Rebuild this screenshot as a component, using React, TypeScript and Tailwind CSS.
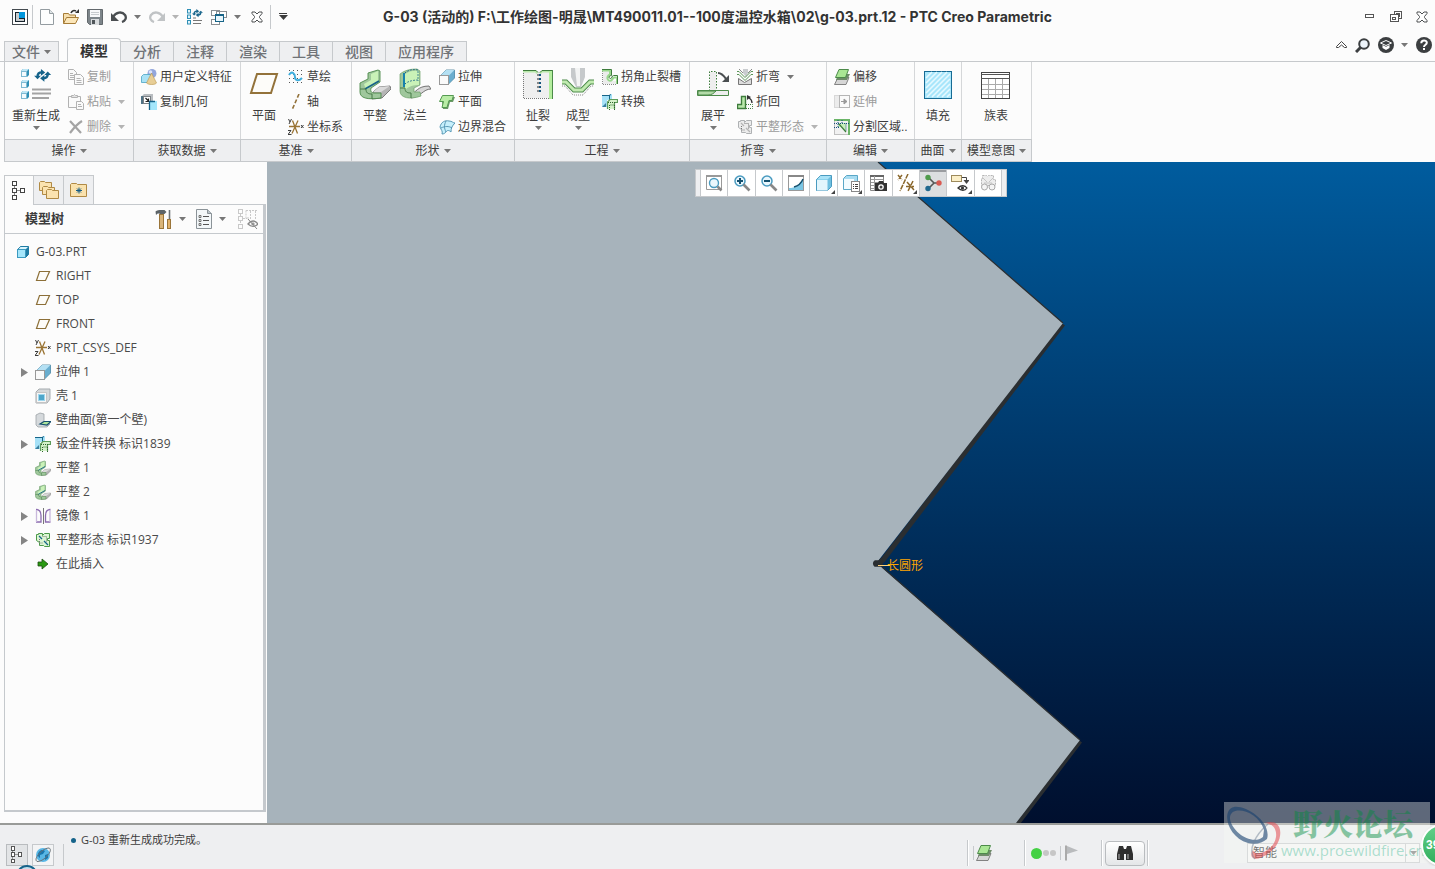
import React, { useState } from 'react';

type IconDef = { w: number; h: number; body: React.ReactNode };

const cube = (x: number, y: number) => (
  <g key={`${x}-${y}`}>
    <path d={`M${x} ${y + 2}l2-2h6v6l-2 2z`} fill="#2f8fb5" />
    <path d={`M${x} ${y + 2}l2-2h6l-2 2z`} fill="#bfe6f5" />
    <rect x={x + 0.5} y={y + 2.5} width="5" height="5" fill="#f4fbfe" stroke="#7fb9d2" />
  </g>
);

const refreshArrows = (
  <g fill="none" stroke="#15638a" strokeWidth="2.8">
    <path d="M3 9c0-4 2-5 5-5" />
    <path d="M15 6c0 4-2 5-5 5" />
    <path d="M7 0l5 4-5 4z" fill="#15638a" stroke="none" />
    <path d="M11 15l-5-4 5-4z" fill="#15638a" stroke="none" />
    <path d="M-1 8h8l-4 4z" fill="#15638a" stroke="none" />
    <path d="M11 7h8l-4-4z" fill="#15638a" stroke="none" />
  </g>
);

const csys = (
  <g fill="none" stroke="#9a7434" strokeWidth="1.3">
    <path d="M1 7.500h11M4.500 1.500l5 13M10 1.500l-6 13" />
    <path d="M0.500 0l1.500 3M3.500 0L1 5M0 11.500h3l-3 4h3.500M13 6l2.500 3M15.500 6L13 9" stroke="#3c3c3c" strokeWidth="1" />
  </g>
);

const flatShape = (line: string, fill: string, dark: string) => (
  <g strokeLinejoin="round">
    <path d="M3.5 1.5h4v2l2-2h5v5h-2v2h2v6h-5l-1-1h-4v-3l-3-2v-6h2z" fill={fill} stroke={line} />
    <path d="M4 4l3 3M9 9l4 4" stroke={dark} strokeWidth="1.3" />
    <path d="M7.5 4.5h4v5M4.5 7v4h4" stroke="#777" strokeDasharray="1 1" fill="none" />
  </g>
);

const ICONS: Record<string, IconDef> = {
  app: { w: 16, h: 16, body: (
    <g shapeRendering="crispEdges">
      <rect x="0.5" y="0.5" width="15" height="15" fill="#fff" stroke="#444b50" />
      <rect x="3" y="3" width="10" height="10" fill="#16232c" />
      <rect x="4" y="4" width="3" height="8" fill="#c8ccce" />
      <rect x="4" y="10" width="8" height="2" fill="#c8ccce" />
      <rect x="7" y="3" width="6" height="6" fill="#0096dc" />
    </g>) },
  newFile: { w: 14, h: 16, body: (
    <g><path d="M0.5 0.5h9l4 4v11h-13z" fill="#fdfefe" stroke="#949ca1" /><path d="M9.5 0.5v4h4" fill="#dfe5e8" stroke="#949ca1" /></g>) },
  open: { w: 16, h: 16, body: (
    <g>
      <path d="M0.5 14.5v-10h5l1 1.5h6v3" fill="#f6dfae" stroke="#a67c37" />
      <path d="M0.5 14.5l3-6h12l-3 6z" fill="#fbe6b9" stroke="#a67c37" />
      <path d="M8 4c1-2.500 3-3 5-2" fill="none" stroke="#333" strokeWidth="1.6" /><path d="M12 4h4V0z" fill="#333" />
    </g>) },
  save: { w: 16, h: 16, body: (
    <g><path d="M0.5 0.5h15v15h-13l-2-2z" fill="#7d858a" stroke="#62686c" /><rect x="3" y="1" width="10" height="7" fill="#f7f8f9" /><path d="M4 3.500h8M4 5.500h8" stroke="#c7cbce" /><rect x="4" y="10" width="8" height="6" fill="#d9dcde" /><rect x="5" y="11" width="3" height="4" fill="#50565a" /></g>) },
  undo: { w: 16, h: 12, body: (
    <g><path d="M2 6c3-5 9-6 12-2 2 3 0 6-3 7" fill="none" stroke="#4a4e51" strokeWidth="2.3" /><path d="M0 2v8h8z" fill="#4a4e51" /></g>) },
  redo: { w: 16, h: 12, body: (
    <g><path d="M14 6C11 1 5 0 2 4c-2 3 0 6 3 7" fill="none" stroke="#c0c3c5" strokeWidth="2.3" /><path d="M16 2v8H8z" fill="#c0c3c5" /></g>) },
  regenSmall: { w: 16, h: 16, body: (
    <g>
      {[0.5, 6, 11.5].map((y) => <rect key={y} x="0.5" y={y} width="3" height="3.500" fill="#dff3fb" stroke="#2f8fb5" />)}
      <path d="M6 11.500h9M6 14.500h8M6 9h3" stroke="#777" />
      <g transform="translate(5.500 0) scale(.55)">{refreshArrows}</g>
    </g>) },
  windows: { w: 16, h: 16, body: (
    <g fill="#fff" shapeRendering="crispEdges">
      <path d="M0.500 1.500h8v5h-8zM5.500 2.500h10v6h-10z" stroke="#8a8f93" />
      <rect x="0.500" y="10.500" width="8" height="5" stroke="#8a8f93" />
      <rect x="4.500" y="5.500" width="8" height="7" fill="#e8f6fc" stroke="#176488" /><path d="M4 6.500h9" stroke="#176488" />
    </g>) },
  closeX: { w: 12, h: 12, body: (
    <g><path d="M1 1h3l2 2 2-2h3v1.500L8.500 5.500v1L11 9.500V11H8L6 9l-2 2H1V9.500l2.500-3v-1L1 2.500z" fill="#fff" stroke="#4c4f51" /></g>) },
  minimize: { w: 10, h: 5, body: <rect x="0.5" y="0.5" width="8" height="3" fill="#fff" stroke="#555" /> },
  restore: { w: 12, h: 12, body: (
    <g fill="none" stroke="#555" shapeRendering="crispEdges"><path d="M4.500 3.500v-3h7v7h-3M6.500 3.500v-1h3v3h-1" /><rect x="0.500" y="3.500" width="8" height="7" fill="#fff" /><rect x="2.500" y="6.500" width="3" height="2" /></g>) },
  collapse: { w: 12, h: 8, body: <path d="M0.500 5.500L5.500 0.500l5 5v1h-2L5.500 4l-3 2.500h-2z" fill="#fff" stroke="#444" /> },
  search: { w: 15, h: 15, body: (
    <g><circle cx="9" cy="6" r="4.800" fill="#edf4fa" stroke="#3c3f41" strokeWidth="2" /><path d="M5.500 9.500L1 14" stroke="#3c3f41" strokeWidth="3" /></g>) },
  learn: { w: 16, h: 16, body: (
    <g><circle cx="8" cy="8" r="8" fill="#3c3f41" /><path d="M2.500 6L8 3.500 13.500 6 8 8.500z" fill="#3c3f41" stroke="#fff" /><path d="M4.500 8v3L8 13l3.500-2V8L8 9.800z" fill="#fff" /></g>) },
  help: { w: 16, h: 16, body: (
    <g><circle cx="8" cy="8" r="8" fill="#3c3f41" /><path d="M5.300 6.200C5.300 2.500 10.800 2.800 10.800 5.800 10.800 7.800 8 7.700 8 10" fill="none" stroke="#fff" strokeWidth="2" /><rect x="7" y="11" width="2" height="2" fill="#fff" /></g>) },
  regen: { w: 32, h: 32, body: (
    <g>
      {cube(1, 1)}{cube(1, 12)}{cube(1, 23)}
      <g transform="translate(15 1) scale(.85)">{refreshArrows}</g>
      <path d="M12 21.500h19M12 25.500h19M12 30h17" stroke="#a3a3a3" strokeWidth="1.800" />
    </g>) },
  copy: { w: 16, h: 16, body: (
    <g fill="#fafafa" stroke="#b2b2b2"><path d="M0.500 0.500h5l3 3v7h-8z" /><path d="M2 4.500h3M2 6.500h4M2 8.500h4" /><path d="M6.500 5.500h6l3 3v7h-9z" /><path d="M8.500 9.500h4M8.500 11.500h5M8.500 13.500h5" /></g>) },
  paste: { w: 16, h: 16, body: (
    <g fill="#fafafa" stroke="#b2b2b2"><path d="M0.500 2.500h12v11h-12z" /><path d="M3.500 3.500v-2h2l1-1 1 1h2v2z" fill="#e4e4e4" /><path d="M8.500 7.500h5l2 2v6h-7z" /><path d="M10 10.500h3M10 12.500h4" /></g>) },
  remove: { w: 16, h: 16, body: <path d="M2 2l11 12M14 2C9 5 5 10 2 14" fill="none" stroke="#a4a4a4" strokeWidth="2.200" /> },
  userFeature: { w: 16, h: 16, body: (
    <g><circle cx="11" cy="4.500" r="4.500" fill="#93a6dc" /><circle cx="9.500" cy="3" r="1.800" fill="#dbe3fa" /><path d="M0.500 7.500l2-2h7v6l-2 2h-7z" fill="#a9e2f6" stroke="#4ba4c4" strokeWidth=".8" /><path d="M10.500 4l5 10c-1.500 2-8 2-10 0z" fill="#e8ce96" stroke="#b8934c" strokeWidth=".6" /></g>) },
  copyGeom: { w: 16, h: 16, body: (
    <g><path d="M0 3l3-3h9v8h-6v2H0z" fill="#b9bdc1" /><rect x="2.500" y="2.500" width="7" height="7" fill="#fff" stroke="#7b8186" /><path d="M4.500 4l3 3M7.500 4.500v3h-3" stroke="#222" fill="none" strokeWidth="1.200" /><path d="M1 2v8" stroke="#2e5a70" strokeWidth="1.500" /><rect x="9" y="7" width="7" height="9" fill="#a3e6fb" /><path d="M8.500 7v9M8 7.500h6" stroke="#15638a" strokeWidth="1.300" fill="none" /></g>) },
  plane: { w: 30, h: 24, body: <path d="M8 2h20l-6 19H2z" fill="#fdfcf9" stroke="#93723a" strokeWidth="2" /> },
  planeSmall: { w: 16, h: 16, body: <path d="M4.500 3.500h10l-4 9h-9z" fill="#fdfcf9" stroke="#8c6f38" strokeWidth="1.200" /> },
  sketch: { w: 16, h: 16, body: (
    <g><path d="M1 1.500h15M1 5.500h15M1 9.500h15M1 13.500h15" stroke="#555" strokeDasharray="1 3" fill="none" /><path d="M1 6c3-5 6-1 6 2s3 5 7 1" fill="none" stroke="#3eaede" strokeWidth="2" /></g>) },
  axis: { w: 16, h: 16, body: <path d="M11 0L4 16" stroke="#93723a" strokeWidth="1.600" strokeDasharray="4 2" /> },
  csys: { w: 16, h: 16, body: csys },
  flat: { w: 32, h: 32, body: (
    <g strokeLinejoin="round">
      <path d="M14 24l6-5 11-1 1 3-9 9-10 1z" fill="#b5b5b5" stroke="#666" strokeWidth=".8" />
      <path d="M14 24l6-5 11-1-9 6z" fill="#dadada" />
      <path d="M1 15l8-4V5l10-3 2 1v11l-9 6c-1 4 1 5 3 5h7v5c-14 2-21 0-21-6z" fill="#9fc79c" stroke="#4c8a4a" strokeWidth=".9" />
      <path d="M5 16l7-4V6l7-3v10L7 22z" fill="#c9f2b7" />
      <path d="M6 21l14-8" stroke="#176488" strokeWidth="1.800" />
      <path d="M1 21h6c0 4 2 5 6 5v5" fill="none" stroke="#477a46" />
    </g>) },
  flange: { w: 32, h: 32, body: (
    <g strokeLinejoin="round">
      <path d="M12 26c5-1 6-8 18-8l2 3c-8 0-10 8-20 9z" fill="#d7d7d7" stroke="#666" strokeWidth=".9" />
      <path d="M1 6c5-4 11-5 17-5l3 2v14l-6 3v4h6l1 4c-11 4-21 2-21-5z" fill="#9fc79c" stroke="#6da068" strokeWidth=".7" />
      <path d="M6 6c4-3 9-4 14-3v14c-5 0-10 1-14 5z" fill="#c9f2b7" />
      <path d="M6 5c3-3 8-4 13-3v11M6 16c3-3 9-4 13-4" fill="none" stroke="#176488" strokeDasharray="1.500 1.500" />
      <path d="M5 5v14" stroke="#1682ad" strokeWidth="2" />
      <path d="M1 20h5c0 4 2 5 6 5v5" fill="none" stroke="#477a46" />
    </g>) },
  extrude: { w: 16, h: 16, body: (
    <g><path d="M1 7l6-6h8.500v8l-6 6z" fill="#8cc7e2" stroke="#477d98" strokeWidth=".8" /><path d="M1 7l6-6h8.500l-6 6z" fill="#b4e0f3" /><path d="M9.500 7l6-6v8l-6 6z" fill="#5ba4c8" opacity=".7" /><rect x="0.500" y="6.500" width="9" height="9" fill="#fafafa" stroke="#999" /></g>) },
  planar: { w: 16, h: 16, body: (
    <g><path d="M3 3h13l-2 5h-3l-2 7H4L3 8H1z" fill="#6c9868" /><path d="M3.500 1.500h11l-1.500 5h-3l-2 7h-5l1.500-6h-4z" fill="#b9eca6" stroke="#559a52" /></g>) },
  blend: { w: 16, h: 16, body: (
    <g fill="#c6effb" stroke="#4b8fae" strokeWidth=".9"><path d="M1 8c1-5 5-7 9-6 3 0 4 2 6 2-3 3-4 5-4 9-2-2-4-2-5 0-1 1-2 2-4 2 1-3-1-4-2-7z" /><path d="M7 2c-2 4-2 7 0 11M2 9c4-2 8-2 11 0" fill="none" /></g>) },
  rip: { w: 32, h: 32, body: (
    <g>
      <rect x="1" y="3" width="29" height="27" fill="#efefef" /><path d="M1.500 5v25.500H27" fill="none" stroke="#777" strokeDasharray="1 1" />
      <rect x="27" y="3" width="3" height="28" fill="#b4ee9e" /><path d="M30.500 2v29" stroke="#4c8a4a" />
      <path d="M1 3.500h13l1 2M27 3.500h-7l-2 2" fill="none" stroke="#b9e8aa" strokeWidth="2" /><path d="M1 2.500h13l2 2M30 2.500H20l-2 2" fill="none" stroke="#3e7c3c" />
      <path d="M16 6v18" stroke="#888" strokeWidth="2" strokeDasharray="2 2" /><path d="M18 6v18" stroke="#15557c" strokeWidth="2" strokeDasharray="2 2" />
    </g>) },
  form: { w: 32, h: 32, body: (
    <g>
      <path d="M9 0h14v9l-4 10h-5L9 9z" fill="#c6c9cb" /><path d="M13 0h5v18h-3z" fill="#f3f4f4" />
      <path d="M0 14h4l8 8h8l8-8h4" fill="none" stroke="#4c8a4a" strokeWidth="5" /><path d="M0 14h4l8 8h8l8-8h4" fill="none" stroke="#c1eab0" strokeWidth="3" />
      <path d="M0 18h3l8 9h10l8-9h3" fill="none" stroke="#888" strokeDasharray="1 1" />
    </g>) },
  corner: { w: 16, h: 16, body: (
    <g><path d="M0.500 2v13.500h14" fill="none" stroke="#888" strokeDasharray="1 1" /><path d="M1 2h7v5c-2 1-2 5 1 5h6v3H1z" fill="#ececec" /><path d="M0 1.500h8v4c-4 2-3 7 1 6 2-1 2-3 3-3h3V15" fill="none" stroke="#9ad88d" strokeWidth="2" /><path d="M0 0.500h9.500v6c-3 0-3 3-1 3s1-3 3-3h4V15" fill="none" stroke="#3e7c3c" /></g>) },
  convert: { w: 16, h: 16, body: (
    <g><path d="M0 1h7l3-1v6H5v7H0z" fill="#a6e1f7" /><path d="M0 1.500h7l2-1M7.500 1v5" stroke="#176488" fill="none" /><path d="M0 13l4-4v4z" fill="#3a7f9f" /><path d="M5.500 15V8l2.500-2.500h7.500v3h-3V15" fill="#d5f2ca" stroke="#5d9c5a" strokeWidth="1.200" /><path d="M7.500 16v-5h4M12.500 16v-6M6 8.500h8" stroke="#2f642d" strokeDasharray="1 1" fill="none" /></g>) },
  unbend: { w: 32, h: 32, body: (
    <g>
      <path d="M13 4h6v18h-6z" fill="#eee" /><path d="M12.500 23V3.500h7v18" fill="none" stroke="#3e7c3c" strokeDasharray="1.500 1.500" />
      <path d="M0.500 22.500h31v5h-31z" fill="#eee" stroke="#4c8a4a" /><path d="M1 23h18c-2 2-4 4-8 4H1z" fill="#b4dba9" stroke="#4c8a4a" />
      <path d="M21 5c4 0 6 3 8 6" fill="none" stroke="#4a4e51" strokeWidth="2" /><path d="M25 14h7V7z" fill="#4a4e51" />
    </g>) },
  bend: { w: 16, h: 16, body: (
    <g><path d="M6 0h5v4l-2 4-3-4z" fill="#c9cccf" /><path d="M0 2.500h2l6 6 6-6h2M0 5.500h2l6 6 6-6h2" fill="none" stroke="#5a9457" /><path d="M1.500 15.500v-6l6 4 7-4v6z" fill="#dcdcdc" stroke="#777" /><path d="M2 0l4 4M15 0l-4 4" stroke="#888" /></g>) },
  bendBack: { w: 16, h: 16, body: (
    <g><path d="M0.500 10.500h4v-8h4v12h-8z" fill="#b9e8aa" stroke="#3e7c3c" strokeWidth="1.400" /><path d="M9 10.500h6.500v4H9" fill="none" stroke="#3e7c3c" strokeDasharray="1 1" /><path d="M15 9c0-3-1-4-3-5" fill="none" stroke="#333" strokeWidth="1.300" /><path d="M10 1v5l4-3z" fill="#333" /></g>) },
  flatPatternGray: { w: 16, h: 16, body: flatShape('#aeb1b3', '#ececec', '#b5b5b5') },
  flatPattern: { w: 16, h: 16, body: flatShape('#4c9a4a', '#dcf6d3', '#176488') },
  offset: { w: 16, h: 16, body: (
    <g><path d="M4 8.500h11l-3 7H0.500z" fill="#d6d6d6" stroke="#777" strokeWidth=".9" /><path d="M4 5h12l-3 6H2z" fill="#6e8b69" /><path d="M5 0.500h9.500L11.500 8.500H1.500z" fill="#a9e694" stroke="#4c8a4a" /></g>) },
  extend: { w: 16, h: 16, body: (
    <g><rect x="0.500" y="1.500" width="5" height="12" fill="#ececec" stroke="#d8d8d8" /><rect x="5.500" y="1.500" width="10" height="12" fill="#fafafa" stroke="#b5b5b5" /><path d="M7 7.500h6M10 5l3 2.500-3 2.500z" stroke="#999" fill="#999" /></g>) },
  split: { w: 16, h: 16, body: (
    <g><rect x="0.500" y="0.500" width="15" height="15" fill="#f1f1f1" stroke="#888" strokeDasharray="1 1" /><path d="M4 4v4h3l5 5V4z" fill="#c8efbb" /><path d="M0 1h16M15 0v16" stroke="#6bb568" strokeWidth="2" /><path d="M0 4.500h12v8M4 1v8M8 1v4M0 8.500h5M12 4.500h3" fill="none" stroke="#174f7c" strokeDasharray="1 1" /><path d="M5 5l7 8" stroke="#3e7c3c" strokeWidth="1.200" /></g>) },
  fill: { w: 30, h: 32, body: (
    <g><rect x="1.500" y="3.500" width="27" height="27" fill="#a8e6fb" stroke="#176b94" />
      <path d="M3 10l6-6M3 15L14 4M3 20L19 4M3 25L24 4M4 29L27 6M9 29l18-18M14 29l13-13M19 29l8-8M24 29l3-3" stroke="#e6f9ff" strokeWidth="1.600" /></g>) },
  table: { w: 30, h: 32, body: (
    <g shapeRendering="crispEdges"><rect x="0.500" y="4.500" width="28" height="26" fill="#fff" stroke="#444" /><path d="M1 16.500h27M1 21.500h27M1 26.500h27M7.500 11v19M14.500 11v19M21.500 11v19" stroke="#aaa" /><path d="M0 6h29M0 10.500h29" stroke="#555" /></g>) },
  refit: { w: 18, h: 18, body: (
    <g><path d="M1.500 2.500h15v13h-15z" fill="#fff" stroke="#999" /><path d="M1 2h16" stroke="#999" strokeWidth="2" /><circle cx="9" cy="9" r="4.500" fill="#eaf7fd" stroke="#4a9bc0" strokeWidth="1.400" /><path d="M12.500 12.500l4 4" stroke="#888" strokeWidth="2.500" /></g>) },
  zoomIn: { w: 18, h: 18, body: (
    <g><circle cx="7" cy="7" r="5" fill="#eaf7fd" stroke="#4a9bc0" strokeWidth="1.500" /><path d="M4 7h6M7 4v6" stroke="#15506e" strokeWidth="2" /><path d="M10.500 10.500l6 6" stroke="#888" strokeWidth="2.600" /></g>) },
  zoomOut: { w: 18, h: 18, body: (
    <g><circle cx="7" cy="7" r="5" fill="#eaf7fd" stroke="#4a9bc0" strokeWidth="1.500" /><path d="M4 7h6" stroke="#15506e" strokeWidth="2" /><path d="M10.500 10.500l6 6" stroke="#888" strokeWidth="2.600" /></g>) },
  repaint: { w: 18, h: 18, body: (
    <g><rect x="1.500" y="1.500" width="15" height="15" fill="#fff" stroke="#999" /><path d="M1 2h16" stroke="#888" strokeWidth="2" /><path d="M2 14c6 0 10-2 14-9v11H2z" fill="#7cc6e4" /><path d="M7 13c4-1 7-3 9-8" fill="none" stroke="#15506e" strokeWidth="1.500" /></g>) },
  shading: { w: 18, h: 18, body: (
    <g><path d="M1.500 5.500l4-4h11v11l-4 4h-11z" fill="#6fc0e0" stroke="#4a9bc0" /><path d="M2 5.500L5.500 2H16l-3.500 3.500z" fill="#a8e2f7" /><rect x="2" y="6" width="10.500" height="10.500" fill="#e3f6fd" /></g>) },
  savedView: { w: 18, h: 18, body: (
    <g><path d="M1.500 4.500l3-3h11v11l-3 3h-11z" fill="#a8dcf1" stroke="#5aa7c7" /><rect x="2" y="5" width="10" height="10" fill="#f2fbff" /><rect x="9.500" y="7.500" width="8" height="10" fill="#fff" stroke="#888" /><path d="M11 10.500h1M13 10.500h3M11 12.500h1M13 12.500h3M11 14.500h1M13 14.500h3" stroke="#444" /></g>) },
  camera: { w: 18, h: 18, body: (
    <g><path d="M1.500 1.500h13v15h-13z" fill="#fff" stroke="#888" /><path d="M1 2h14" stroke="#666" strokeWidth="2" /><path d="M2 5.500h12M2 8.500h12M2 11.500h5M2 14.500h5M5.500 2v14" stroke="#999" /><path d="M6 9h3l1-2h4l1 2h3v8H6z" fill="#333" /><circle cx="12" cy="13" r="2.800" fill="#fff" /><circle cx="12" cy="13" r="1.500" fill="#444" /></g>) },
  datum: { w: 18, h: 18, body: <path d="M1 1l4 5M5 1L1 6M11 0L3 17M10 8l7 8M16 7l-5 10M9 12.500h8" fill="none" stroke="#8a672c" strokeWidth="1.500" strokeDasharray="5 1" /> },
  spin: { w: 18, h: 18, body: (
    <g><path d="M5 4l5 5v0l-5 5M10 9h6" stroke="#555" strokeWidth="1.600" fill="none" /><circle cx="4" cy="3.500" r="2.700" fill="#4f9b4c" /><circle cx="4" cy="14.500" r="2.700" fill="#21698f" /><circle cx="15" cy="9" r="2.700" fill="#d95a52" /></g>) },
  annotation: { w: 18, h: 18, body: (
    <g><rect x="0.500" y="1.500" width="10" height="6" fill="#fbefc8" stroke="#9d8a5c" /><path d="M11 3.500h4.500v5" fill="none" stroke="#444" /><path d="M12.500 6h6l-3 4z" fill="#444" /><path d="M7 14c3-3 7-3 9 0-2 3-6 3-9 0z" fill="#fff" stroke="#333" strokeWidth="1.300" /><circle cx="11.500" cy="14" r="1.600" fill="#333" /></g>) },
  glasses: { w: 18, h: 18, body: (
    <g><path d="M3.500 1.500h4l1 1 1-1h5v4h2v6h-14v-7h1z" fill="#ededed" stroke="#b5b5b5" strokeDasharray="2 1" /><path d="M4 4l4 4M14 4l-4 4M5 9h8" stroke="#c4c4c4" fill="none" /><circle cx="5.500" cy="13" r="3" fill="#f5f5f5" stroke="#a9a9a9" /><circle cx="13" cy="13" r="3" fill="#f5f5f5" stroke="#a9a9a9" /></g>) },
  treeTab: { w: 14, h: 20, body: (
    <g fill="#fff" stroke="#444" shapeRendering="crispEdges"><path d="M2.500 5v10M5 9.500h5" stroke="#888" /><rect x="0.500" y="0.500" width="4" height="4" /><rect x="0.500" y="7.500" width="4" height="4" /><rect x="0.500" y="14.500" width="4" height="4" /><rect x="8.500" y="7.500" width="4" height="4" /></g>) },
  folders: { w: 20, h: 20, body: (
    <g fill="#fbe3b0" stroke="#b08a45"><path d="M0.500 10.500v-8l1-1h4l1 1h6v8z" /><path d="M3.500 14.500v-7l1-1h4l1 1h6v7z" /><path d="M7.500 18.500v-8l1-1h4l1 1h6v8z" /></g>) },
  favorites: { w: 18, h: 16, body: (
    <g><path d="M0.500 14.500v-12l1-1h5l1 1h9v12z" fill="#fae2ad" stroke="#b08a45" /><path d="M9 5.500v6M6 8.500h6M7 6.500l4 4M11 6.500l-4 4" stroke="#155c85" /></g>) },
  tools: { w: 18, h: 20, body: (
    <g><path d="M0.500 2.500c2-2 6-1.500 9-1.500l2 2-2 2H5c-2-1-3 0-4 1z" fill="#5c6367" /><rect x="4.500" y="5.500" width="4" height="14" fill="#d9b479" stroke="#9a753a" /><path d="M14.500 1v9" stroke="#6c7377" strokeWidth="1.600" /><rect x="12.500" y="10.500" width="3" height="9" fill="#e2b26a" stroke="#9a753a" /></g>) },
  listDoc: { w: 16, h: 20, body: (
    <g><path d="M0.500 0.500h11l4 4v15h-15z" fill="#f3f7f9" stroke="#8b9398" /><path d="M11.500 0.500v4h4" fill="#b8c2c8" stroke="#8b9398" /><path d="M7 7.500h6M7 11.500h6M7 15.500h6" stroke="#555" /><path d="M3 6.500h2v2H3zM3 10.500h2v2H3zM3 14.500h2v2H3z" fill="none" stroke="#555" strokeWidth=".8" /></g>) },
  treeHide: { w: 20, h: 20, body: (
    <g fill="none" stroke="#c9c9c9"><rect x="0.500" y="0.500" width="4" height="4" /><rect x="0.500" y="7.500" width="4" height="4" /><rect x="0.500" y="15.500" width="4" height="4" /><path d="M5 9.500h4M2.500 5v2M2.500 12v3M8 1.500h11M9 9h3M12.500 2v8M17.500 2v8M8 1.500v9" strokeDasharray="2 1" /><path d="M10 15c3-4 7-4 10 0-3 3-7 3-10 0z" stroke="#888" strokeWidth="1.300" /><circle cx="15" cy="15" r="1.500" fill="#888" /><path d="M10 10l9 10" stroke="#888" /></g>) },
  part: { w: 14, h: 14, body: (
    <g><path d="M1.500 4.500l3-3h8v8l-3 3h-8z" fill="#1f7ba3" stroke="#1f7ba3" /><path d="M2 4.500L4.500 2H12L9.500 4.500z" fill="#d9f5fe" /><rect x="1.500" y="4.500" width="8" height="8" fill="#a5e6fb" stroke="#3c9ac0" /></g>) },
  shell: { w: 16, h: 16, body: (
    <g><path d="M1 4l3-3h11v10l-3 4H1z" fill="#d5d8da" stroke="#a5abaf" /><path d="M1.500 4.500h10v10h-10z" fill="#f7f7f7" stroke="#c4c4c4" /><rect x="3.500" y="6.500" width="6" height="6" fill="#4fa6ca" stroke="#9ed7ee" /></g>) },
  wall: { w: 16, h: 16, body: (
    <g><path d="M1 3l4-2 4 1v7l-4 3h10l-3 3H3l-2-2z" fill="#d5d9dc" stroke="#9ca2a6" strokeWidth=".8" /><path d="M5 12l4-2.500h7L12 13z" fill="#aee59c" stroke="#15506e" strokeWidth="1.200" /></g>) },
  mirror: { w: 16, h: 16, body: (
    <g fill="none" strokeWidth="1.300"><path d="M1 1.500c4 0 5 3 5 6V14H1M15.500 1.500c-4 0-5 3-5 6V14h5" stroke="#8c6cb0" /><path d="M1.500 2v12M15 2v12" stroke="#c9b8dc" /><path d="M8.500 0v16" stroke="#777" strokeWidth="1" /></g>) },
  insert: { w: 12, h: 12, body: <path d="M1 4h4V1l6 5-6 5V8H1z" fill="#2a9a12" stroke="#1d4d12" strokeWidth=".8" /> },
  globe: { w: 18, h: 18, body: (
    <g><circle cx="9" cy="9" r="7" fill="#58b7e6" /><path d="M5 6c2-3 5-2 6-1l-2 3-3 1v3c-2-1-3-4-1-6zM11 9l3-1v4l-3 2z" fill="#1b77ad" /><path d="M3 15.500C-1 13 8 2 15 2c5 2-5 14-12 13.500z" fill="none" stroke="#6a7278" /></g>) },
  flag: { w: 14, h: 16, body: <g><path d="M1 0.500v15" stroke="#aaa" strokeWidth="2" /><path d="M2 1l11 4.500L2 9z" fill="#b9bbbd" /></g> },
  binoculars: { w: 18, h: 16, body: (
    <g fill="#2f2f2f"><path d="M3 1h4l1 3v11H1V9z" /><path d="M15 1h-4l-1 3v11h7V9z" /><rect x="7" y="4" width="4" height="5" /><path d="M3 9v5M12 9v5" stroke="#8b8b8b" strokeWidth="1.500" /></g>) },
};

const Icon = ({ name, w, h }: { name: string; w?: number; h?: number }) => {
  const icon = ICONS[name];
  return (
    <svg className="shrink-0" width={w ?? icon.w} height={h ?? icon.h} viewBox={`0 0 ${icon.w} ${icon.h}`} aria-hidden="true">
      {icon.body}
    </svg>
  );
};

const Caret = ({ muted = false }: { muted?: boolean }) => (
  <svg className={`shrink-0 ${muted ? 'text-[#b4b4b4]' : 'text-[#777777]'}`} width="7" height="4" viewBox="0 0 7 4" aria-hidden="true">
    <path d="M0 0h7L3.500 4z" fill="currentColor" />
  </svg>
);

type Cmd = { label: string; icon: string; caret?: boolean; disabled?: boolean };
type Group = { title: string; width: string; pad: string; colPad?: string; big: Cmd[]; small: Cmd[] };

const groups: Group[] = [
  {
    title: '操作', width: 'w-[129px]', pad: 'pl-[7px]', colPad: 'pl-2',
    big: [{ label: '重新生成', icon: 'regen', caret: true }],
    small: [
      { label: '复制', icon: 'copy', disabled: true },
      { label: '粘贴', icon: 'paste', caret: true, disabled: true },
      { label: '删除', icon: 'remove', caret: true, disabled: true },
    ],
  },
  {
    title: '获取数据', width: 'w-[107px]', pad: 'pl-[3px]', big: [],
    small: [{ label: '用户定义特征', icon: 'userFeature' }, { label: '复制几何', icon: 'copyGeom' }],
  },
  {
    title: '基准', width: 'w-[111px]', pad: 'pl-[3px]',
    big: [{ label: '平面', icon: 'plane' }],
    small: [{ label: '草绘', icon: 'sketch' }, { label: '轴', icon: 'axis' }, { label: '坐标系', icon: 'csys' }],
  },
  {
    title: '形状', width: 'w-[163px]', pad: 'pl-[3px]',
    big: [{ label: '平整', icon: 'flat' }, { label: '法兰', icon: 'flange' }],
    small: [{ label: '拉伸', icon: 'extrude' }, { label: '平面', icon: 'planar' }, { label: '边界混合', icon: 'blend' }],
  },
  {
    title: '工程', width: 'w-[175px]', pad: 'pl-[3px]',
    big: [{ label: '扯裂', icon: 'rip', caret: true }, { label: '成型', icon: 'form', caret: true }],
    small: [{ label: '拐角止裂槽', icon: 'corner' }, { label: '转换', icon: 'convert' }],
  },
  {
    title: '折弯', width: 'w-[137px]', pad: 'pl-[3px]',
    big: [{ label: '展平', icon: 'unbend', caret: true }],
    small: [
      { label: '折弯', icon: 'bend', caret: true },
      { label: '折回', icon: 'bendBack' },
      { label: '平整形态', icon: 'flatPatternGray', caret: true, disabled: true },
    ],
  },
  {
    title: '编辑', width: 'w-[88px]', pad: 'pl-[3px]', big: [],
    small: [{ label: '偏移', icon: 'offset' }, { label: '延伸', icon: 'extend', disabled: true }, { label: '分割区域..', icon: 'split' }],
  },
  { title: '曲面', width: 'w-[47px]', pad: 'pl-[3px]', big: [{ label: '填充', icon: 'fill' }], small: [] },
  { title: '模型意图', width: 'w-[70px]', pad: 'pl-[14px]', big: [{ label: '族表', icon: 'table' }], small: [] },
];

const menuTabs = ['模型', '分析', '注释', '渲染', '工具', '视图', '应用程序'];

const viewTools = [
  { icon: 'refit', label: '重新调整' },
  { icon: 'zoomIn', label: '放大' },
  { icon: 'zoomOut', label: '缩小' },
  { icon: 'repaint', label: '重画' },
  { icon: 'shading', label: '显示样式', more: true },
  { icon: 'savedView', label: '已保存方向', more: true },
  { icon: 'camera', label: '视图管理器' },
  { icon: 'datum', label: '基准显示', more: true },
  { icon: 'spin', label: '旋转中心', on: true },
  { icon: 'annotation', label: '注释显示', more: true },
  { icon: 'glasses', label: '平整形态预览' },
];

const tree = [
  { label: 'RIGHT', icon: 'planeSmall' },
  { label: 'TOP', icon: 'planeSmall' },
  { label: 'FRONT', icon: 'planeSmall' },
  { label: 'PRT_CSYS_DEF', icon: 'csys' },
  { label: '拉伸 1', icon: 'extrude', children: true },
  { label: '壳 1', icon: 'shell' },
  { label: '壁曲面(第一个壁)', icon: 'wall' },
  { label: '钣金件转换 标识1839', icon: 'convert', children: true },
  { label: '平整 1', icon: 'flat' },
  { label: '平整 2', icon: 'flat' },
  { label: '镜像 1', icon: 'mirror', children: true },
  { label: '平整形态 标识1937', icon: 'flatPattern', children: true },
  { label: '在此插入', icon: 'insert' },
];

const ToolButton = ({ icon, label, className = '' }: { icon: string; label: string; className?: string }) => (
  <button type="button" aria-label={label} className={`flex h-6 items-center justify-center ${className}`}>
    <Icon name={icon} />
  </button>
);

const CaretButton = ({ label, muted }: { label: string; muted?: boolean }) => (
  <button type="button" aria-label={label} className="flex h-6 w-3 items-center justify-center">
    <Caret muted={muted} />
  </button>
);

const TitleBar = () => (
  <div className="grid h-[33px] grid-cols-[1fr_auto_1fr] items-center">
    <div className="flex items-center">
      <ToolButton icon="app" label="窗口" className="w-8 pl-2" />
      <span className="h-6 w-px bg-[#c6c9cc]" />
      <ToolButton icon="newFile" label="新建" className="ml-[2px] w-6" />
      <ToolButton icon="open" label="打开" className="w-6" />
      <ToolButton icon="save" label="保存" className="w-6" />
      <ToolButton icon="undo" label="撤消" className="w-6" />
      <CaretButton label="撤消列表" />
      <ToolButton icon="redo" label="重做" className="ml-[2px] w-6" />
      <CaretButton label="重做列表" muted />
      <ToolButton icon="regenSmall" label="重新生成" className="ml-[2px] w-6" />
      <ToolButton icon="windows" label="切换窗口" className="w-6" />
      <CaretButton label="窗口列表" />
      <ToolButton icon="closeX" label="关闭" className="ml-1 w-5" />
      <span className="ml-[3px] h-6 w-px bg-[#c6c9cc]" />
      <button type="button" aria-label="自定义快速访问工具栏" className="flex h-6 w-6 flex-col items-center justify-center gap-px">
        <span className="h-px w-2 bg-[#3c3c3c]" />
        <svg width="9" height="5" viewBox="0 0 9 5" aria-hidden="true"><path d="M0 0h9L4.500 5z" fill="#3c3c3c" /></svg>
      </button>
    </div>
    <h1 className="font-['Inter','Noto_Sans_CJK_SC',sans-serif] text-[14px] font-bold whitespace-nowrap text-[#333333]">
      G-03 (活动的) F:\工作绘图-明晟\MT490011.01--100度温控水箱\02\g-03.prt.12 - PTC Creo Parametric
    </h1>
    <div className="flex items-center justify-end">
      <ToolButton icon="minimize" label="最小化" className="w-[26px]" />
      <ToolButton icon="restore" label="还原" className="w-[26px]" />
      <ToolButton icon="closeX" label="退出" className="w-[26px]" />
    </div>
  </div>
);

const MenuTabs = () => {
  const [active, setActive] = useState('模型');

  return (
    <div className="flex h-[29px] items-end border-b border-[#c6c9cc] pl-1 text-[14px] leading-4 text-[#707377]">
      <button type="button" className="mr-2 flex h-5 w-[55px] items-center justify-center gap-1 border border-b-0 border-[#c6c9cc] bg-[#eeeff1] font-medium">
        文件
        <Caret />
      </button>
      {menuTabs.map((tab) => (
        <button
          key={tab}
          type="button"
          onClick={() => setActive(tab)}
          className={
            tab === active
              ? 'relative -mb-px h-6 rounded-t-sm border border-b-0 border-[#c6c9cc] bg-[#fcfcfc] px-3 font-bold text-[#333333]'
              : 'h-5 border-t border-r border-[#c6c9cc] bg-[#eeeff1] px-3 font-medium'
          }
        >
          {tab}
        </button>
      ))}
      <div className="ml-auto flex items-center pr-px pb-1">
        <ToolButton icon="collapse" label="最小化功能区" className="w-4" />
        <ToolButton icon="search" label="搜索" className="w-6" />
        <ToolButton icon="learn" label="学习" className="w-6" />
        <CaretButton label="学习资源" />
        <ToolButton icon="help" label="帮助" className="ml-1 w-5" />
      </div>
    </div>
  );
};

const BigCommand = ({ cmd }: { cmd: Cmd }) => (
  <button type="button" className="flex min-w-10 flex-col items-center whitespace-nowrap">
    <Icon name={cmd.icon} h={32} />
    <span className="mt-2 leading-4">{cmd.label}</span>
    {cmd.caret && <span className="mt-[2px]"><Caret /></span>}
  </button>
);

const SmallCommand = ({ cmd }: { cmd: Cmd }) => (
  <button
    type="button"
    disabled={cmd.disabled}
    className={`flex h-6 w-full items-center gap-[3px] whitespace-nowrap ${cmd.disabled ? 'text-[#9b9b9b]' : ''}`}
  >
    <Icon name={cmd.icon} />
    {cmd.label}
    {cmd.caret && <span className="ml-1"><Caret muted={cmd.disabled} /></span>}
  </button>
);

const Ribbon = () => (
  <div className="flex pl-1">
    <div className="flex border-l border-[#c6c9cc]">
      {groups.map((group) => (
        <section key={group.title} className={`flex h-[77px] items-start border-r border-[#d5d7d9] pt-[6px] ${group.width} ${group.pad}`}>
          {group.big.map((cmd) => <BigCommand key={cmd.label} cmd={cmd} />)}
          {group.small.length > 0 && (
            <div className={`-mt-[3px] flex flex-col gap-px ${group.colPad ?? 'pl-1'}`}>
              {group.small.map((cmd) => <SmallCommand key={cmd.label} cmd={cmd} />)}
            </div>
          )}
        </section>
      ))}
    </div>
  </div>
);

const RibbonFooter = () => (
  <div className="flex pl-1">
    <div className="flex h-[23px] border border-r-0 border-[#c6c9cc] bg-[#eeeff1]">
      {groups.map((group) => (
        <button
          key={group.title}
          type="button"
          className={`flex items-center justify-center gap-1 border-r border-[#c6c9cc] whitespace-nowrap ${group.width}`}
        >
          {group.title}
          <Caret />
        </button>
      ))}
    </div>
  </div>
);

const ModelTree = () => (
  <aside className="flex w-[267px] shrink-0 flex-col bg-[#fcfcfc] pt-[13px] pr-px pb-[11px] pl-1">
    <div className="flex h-[29px] items-end">
      <button type="button" aria-label="模型树" className="relative -mb-px flex h-[30px] w-[30px] items-center justify-center border border-b-0 border-[#c6c9cc] bg-[#fcfcfc]">
        <Icon name="treeTab" />
      </button>
      <button type="button" aria-label="文件夹浏览器" className="flex h-[29px] w-[30px] items-center justify-center border-t border-r border-[#c6c9cc] bg-[#eeeff1]">
        <Icon name="folders" />
      </button>
      <button type="button" aria-label="收藏夹" className="flex h-[29px] w-[30px] items-center justify-center border-t border-r border-[#c6c9cc] bg-[#eeeff1]">
        <Icon name="favorites" />
      </button>
    </div>
    <div className="flex-1 border-t border-r-3 border-b-2 border-l border-[#c5c9cd]">
      <div className="flex h-[29px] items-center border-b border-[#c5c9cd] pr-[3px] pl-5">
        <h2 className="mr-auto text-[13px] font-bold">模型树</h2>
        <ToolButton icon="tools" label="设置" className="w-6" />
        <CaretButton label="设置列表" />
        <ToolButton icon="listDoc" label="显示" className="ml-1 w-6" />
        <CaretButton label="显示列表" />
        <ToolButton icon="treeHide" label="隐藏项" className="ml-2 w-6" />
      </div>
      <ul className="pt-[6px] font-['Open_Sans','Noto_Sans_CJK_SC',sans-serif] text-[#4a4a4a]">
        <li className="flex h-6 items-center gap-[6px] pl-[11px]">
          <Icon name="part" />
          G-03.PRT
        </li>
        {tree.map((node) => (
          <li key={node.label} className="flex h-6 items-center pl-[15px] whitespace-nowrap">
            <span className="flex w-[15px] items-center">
              {node.children && (
                <button type="button" aria-label={`展开 ${node.label}`} className="flex h-4 items-center">
                  <svg width="8" height="9" viewBox="0 0 8 9" aria-hidden="true"><path d="M1 0l7 4.500L1 9z" fill="#858585" /></svg>
                </button>
              )}
            </span>
            <span className="mr-[5px] flex w-4 justify-center">
              <Icon name={node.icon} w={node.icon === 'insert' ? 12 : 16} h={node.icon === 'insert' ? 12 : 16} />
            </span>
            {node.label}
          </li>
        ))}
      </ul>
    </div>
  </aside>
);

const Viewport = () => (
  <main className="relative min-w-0 flex-1 overflow-hidden bg-linear-to-b from-[#005c9e] to-[#000f2e]">
    <svg className="absolute inset-0 h-full w-full" viewBox="0 0 1168 661" preserveAspectRatio="xMinYMin slice" aria-hidden="true">
      {/* sheet thickness sits behind the face */}
      <path d="M796 162L616 398l-8 6h-4M813 579l-63 83" fill="none" stroke="#2a2e31" strokeWidth="5" />
      <path d="M0 0h611l185 161-185 238-4 2 4 1 202 176-64 83H0z" fill="#a7b3bb" />
      <path d="M611 0l185 161M615 405l198 173" fill="none" stroke="#2a2e31" strokeWidth="1.200" />
      <path d="M615 396l-3 3h-4a3 3 0 0 0 0 5h8" fill="#2a2e31" stroke="#2a2e31" strokeWidth="1.500" />
      <path d="M611 403.500h12" stroke="#ffd27a" />
    </svg>
    <span className="absolute top-[396px] left-[620px] leading-4 text-[#ffa500]">长圆形</span>
    <div className="absolute top-[7px] left-1/2 flex h-7 w-[312px] -translate-x-1/2 border border-[#c6c9cc] bg-[#eeeff1] px-1">
      {viewTools.map((tool) => (
        <button
          key={tool.icon}
          type="button"
          aria-label={tool.label}
          className={`relative flex flex-1 items-center justify-center border-r border-[#c6c9cc] first:border-l ${
            tool.on ? 'bg-[#dcdee0] inset-shadow-[0_2px_0_#9a9ca0]' : 'bg-white'
          }`}
        >
          <Icon name={tool.icon} />
          {tool.more && (
            <svg className="absolute right-[2px] bottom-[2px]" width="4" height="4" viewBox="0 0 4 4" aria-hidden="true">
              <path d="M4 0v4H0z" fill="#444" />
            </svg>
          )}
        </button>
      ))}
    </div>
  </main>
);

const Divider = () => <span className="h-[26px] w-[2px] border-l border-[#c6c9cc] bg-white" />;

const StatusBar = () => (
  <footer className="relative flex h-[46px] shrink-0 border-t-2 border-[#999b98] bg-[#eeeff1]">
    <div className="flex items-end gap-1 pb-[3px] pl-[6px]">
      <button type="button" aria-label="切换导航器" className="flex h-[22px] w-[22px] items-center justify-center border border-[#b9bcbf] bg-[#e2e4e6]">
        <Icon name="treeTab" w={14} h={18} />
      </button>
      <button type="button" aria-label="切换浏览器" className="flex h-[22px] w-[22px] items-center justify-center border border-[#c6c9cc] bg-[#f3f4f5]">
        <Icon name="globe" />
      </button>
      <span className="ml-[5px] h-[22px] w-px bg-[#c6c9cc]" />
    </div>
    <p className="flex h-[30px] items-center gap-[5px] pl-[7px] font-['Open_Sans','Noto_Sans_CJK_SC',sans-serif] text-[11px]">
      <span className="h-[5px] w-[5px] rounded-full bg-[#15638a]" />
      G-03 重新生成成功完成。
    </p>
    <div className="ml-auto flex items-center pt-3 pr-[15px]">
      <Divider />
      <span className="ml-1"><Divider /></span>
      <span className="mr-8 ml-[2px]"><Icon name="offset" /></span>
      <Divider />
      <span className="ml-[5px] h-[11px] w-[11px] rounded-full bg-[#45d145]" />
      <span className="ml-px h-[6px] w-[6px] rounded-full bg-[#c6c6c6]" />
      <span className="ml-px h-[6px] w-[6px] rounded-full bg-[#c6c6c6]" />
      <span className="ml-1"><Divider /></span>
      <span className="mr-[22px] ml-1"><Icon name="flag" /></span>
      <Divider />
      <button type="button" aria-label="查找" className="mx-[2px] flex h-[25px] w-10 items-center justify-center rounded-sm border border-[#b9bcbf] bg-linear-to-b from-white to-[#e4e6e8]">
        <Icon name="binoculars" />
      </button>
      <Divider />
      <label className="relative ml-[98px]">
        <span className="sr-only">选择过滤器</span>
        <select className="block h-5 w-[173px] appearance-none border border-[#c6c9cc] bg-[#f5f5f6] pl-[5px] leading-[18px] text-[#222222]">
          <option>智能</option>
        </select>
        <span className="pointer-events-none absolute inset-y-0 right-0 flex w-[15px] items-center justify-center border-l border-[#c6c9cc]">
          <Caret />
        </span>
      </label>
    </div>
    {/* forum watermark over the bottom right corner */}
    <div className="pointer-events-none absolute right-[5px] bottom-[6px] h-[61px] w-[206px] bg-[#f7fbf5]/38">
      <svg className="absolute top-0 left-0" width="66" height="61" viewBox="0 0 66 61" aria-hidden="true">
        <path d="M43 37C48 20 22 3 10 5-3 8 3 35 24 41c8 2 14 0 19-4zM39 35C28 44 8 30 6 17 5 2 34 8 40 28z" fill="#15406e" fillRule="evenodd" opacity=".6" />
        <path d="M41 21c8-3 17 0 15 13-2 14-18 23-25 23-5-1-4-6-2-9 2 8 21 1 23-13 1-8-3-13-11-14z" fill="#e2474f" opacity=".55" />
        <path d="M31 57c-8-8 0-24 13-35" fill="none" stroke="#75869a" strokeWidth="1.500" opacity=".5" />
      </svg>
      <span className="absolute top-0 right-[17px] font-['Noto_Serif_CJK_SC','Noto_Sans_CJK_SC',sans-serif] text-[30px] leading-10 font-black text-[#008a3c]/45">野火论坛</span>
      <span className="absolute top-[38px] left-[57px] font-['Open_Sans',sans-serif] text-[15px] leading-5 text-[#4dbd9c]/45">www.proewildfire.cn</span>
    </div>
    <div className="pointer-events-none absolute -top-px right-0 h-[42px] w-[14px] overflow-hidden">
      <div className="flex h-[42px] w-[42px] items-center rounded-full border-2 border-white bg-linear-to-b from-[#62d08a] to-[#2fae5c] pl-[3px] font-['Liberation_Sans',sans-serif] text-[12px] font-bold text-white shadow">
        39
      </div>
    </div>
    <div className="pointer-events-none absolute bottom-0 left-4 h-1 w-[22px] overflow-hidden">
      <div className="h-[22px] w-[22px] rounded-full border-2 border-[#15638a] bg-[#c5dfec]" />
    </div>
  </footer>
);

const App = () => (
  <div className="flex h-screen flex-col overflow-hidden bg-[#fcfcfc] font-['Liberation_Sans','Noto_Sans_CJK_SC',sans-serif] text-[12px] leading-4 text-[#3c3c3c]">
    <header className="shrink-0">
      <TitleBar />
      <MenuTabs />
      <Ribbon />
      <RibbonFooter />
    </header>
    <div className="flex min-h-0 flex-1">
      <ModelTree />
      <Viewport />
    </div>
    <StatusBar />
  </div>
);

export default App;
